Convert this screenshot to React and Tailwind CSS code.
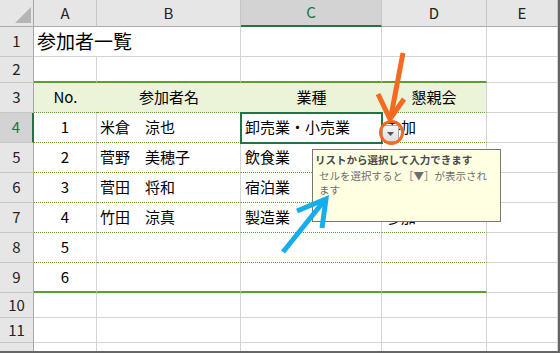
import React from 'react';

const rows = [
    [1, '米倉　涼也', '卸売業・小売業', '参加'],
    [2, '菅野　美穂子', '飲食業', '参加'],
    [3, '菅田　将和', '宿泊業', '不参加'],
    [4, '竹田　涼真', '製造業', '参加'],
    [5, '', '', ''],
    [6, '', '', ''],
];

const cell = 'border-r border-b border-[#d4d4d4] flex items-center text-[15px] text-black whitespace-nowrap';
const rowHead = 'bg-[#e6e6e6] border-r border-r-[#a8a8a8] border-b border-b-[#c6c6c6] flex items-center justify-center text-[15px] text-[#222]';
const colHead = 'bg-[#e6e6e6] border-r border-r-[#c6c6c6] border-b border-b-[#ababab] flex items-center justify-center text-[15px] text-[#222]';
const tbl = 'border-r border-r-[#d4d4d4] border-b border-b-[#5c9f2a] [border-bottom-style:dotted] flex items-center text-[15px] text-black whitespace-nowrap';
const tblLast = 'border-r border-r-[#d4d4d4] border-b-2 border-b-[#5c9f2a] flex items-center text-[15px] text-black whitespace-nowrap';

export default function App() {
    return (
        <div className="relative w-[560px] h-[353px] overflow-hidden bg-white border-r-2 border-b-2 border-[#666] font-['Noto_Sans_CJK_JP',sans-serif]">
            <div className="grid h-full grid-cols-[34px_63px_144px_141px_105px_1fr] grid-rows-[27px_30px_26px_30px_30px_30px_30px_30px_30px_30px_25px_25px_1fr]">
                {/* column headers */}
                <div className="bg-[#e6e6e6] border-r border-r-[#a8a8a8] border-b border-b-[#ababab] flex items-end justify-end pr-[1px] pb-[2px]">
                    <svg width="18" height="17" viewBox="0 0 18 17">
                        <polygon points="1,16 17,16 17,0" fill="#b5b5b5" />
                    </svg>
                </div>
                <div className={colHead}>A</div>
                <div className={colHead}>B</div>
                <div className="bg-[#d3d3d3] border-r border-r-[#c6c6c6] border-b-2 border-b-[#217346] flex items-center justify-center text-[15px] text-[#217346]">C</div>
                <div className={colHead}>D</div>
                <div className={colHead}>E</div>

                {/* row 1 */}
                <div className={rowHead}>1</div>
                <div className="border-b border-[#d4d4d4] flex items-center pl-[3px] text-[19px] text-black whitespace-nowrap">参加者一覧</div>
                <div className={cell}></div>
                <div className={cell}></div>
                <div className={cell}></div>
                <div className={cell}></div>

                {/* row 2 */}
                <div className={rowHead}>2</div>
                <div className="border-r border-r-[#d4d4d4] border-b-2 border-b-[#5c9f2a]"></div>
                <div className="border-r border-r-[#d4d4d4] border-b-2 border-b-[#5c9f2a]"></div>
                <div className="border-r border-r-[#d4d4d4] border-b-2 border-b-[#5c9f2a]"></div>
                <div className="border-r border-r-[#d4d4d4] border-b-2 border-b-[#5c9f2a]"></div>
                <div className={cell}></div>

                {/* row 3: table header */}
                <div className={rowHead}>3</div>
                <div className="bg-[#ebf4d8] border-b border-b-[#5c9f2a] [border-bottom-style:dotted] flex items-center justify-center text-[15px] text-black">No.</div>
                <div className="bg-[#ebf4d8] border-b border-b-[#5c9f2a] [border-bottom-style:dotted] flex items-center justify-center text-[15px] text-black">参加者名</div>
                <div className="bg-[#ebf4d8] border-b border-b-[#5c9f2a] [border-bottom-style:dotted] flex items-center justify-center text-[15px] text-black">業種</div>
                <div className="bg-[#ebf4d8] border-r border-r-[#d4d4d4] border-b border-b-[#5c9f2a] [border-bottom-style:dotted] flex items-center justify-center text-[15px] text-black">懇親会</div>
                <div className={cell}></div>

                {/* rows 4-9 */}
                {rows.map((r, i) => {
                    const c = i === rows.length - 1 ? tblLast : tbl;
                    const sel = i === 0;
                    return (
                        <React.Fragment key={i}>
                            <div className={sel
                                ? 'bg-[#d3d3d3] border-r-2 border-r-[#217346] border-b border-b-[#c6c6c6] flex items-center justify-center text-[15px] text-[#217346]'
                                : rowHead}>{i + 4}</div>
                            <div className={c + ' justify-center'}>{r[0]}</div>
                            <div className={c + ' pl-[3px]'}>{r[1]}</div>
                            <div className={c + ' pl-[4px]'}>{r[2]}</div>
                            <div className={c + ' pl-[4px]'}>{r[3]}</div>
                            <div className={cell}></div>
                        </React.Fragment>
                    );
                })}

                {/* rows 10-12 */}
                {[10, 11, 12].map((n) => (
                    <React.Fragment key={n}>
                        <div className={rowHead + (n === 12 ? ' items-start pt-[4px]' : '')}>{n}</div>
                        <div className={cell}></div>
                        <div className={cell}></div>
                        <div className={cell}></div>
                        <div className={cell}></div>
                        <div className={cell}></div>
                    </React.Fragment>
                ))}
            </div>

            {/* active cell C4 */}
            <div className="absolute left-[240px] top-[112px] w-[143px] h-[32px] border-2 border-[#217346]"></div>

            {/* list dropdown button */}
            <div className="absolute left-[382px] top-[125px] w-[17px] h-[17px] border border-[#a9a9a9] bg-gradient-to-b from-[#f7f7f7] to-[#dedede] flex items-center justify-center">
                <svg width="7" height="4" viewBox="0 0 7 4">
                    <polygon points="0,0 7,0 3.5,4" fill="#555" />
                </svg>
            </div>

            {/* input message tooltip */}
            <div className="absolute left-[312px] top-[149px] w-[189px] h-[73px] bg-[#ffffe1] border border-[#767676] pl-[2px] pt-[3px]">
                <div className="text-[10.5px] leading-[14px] font-bold text-[#4a4a4a] whitespace-nowrap">リストから選択して入力できます</div>
                <div className="mt-[2px] pl-[4px] text-[10.5px] leading-[14px] text-[#6e6e6e] whitespace-nowrap">
                    セルを選択すると［▼］が表示され<br />ます
                </div>
            </div>

            {/* annotations */}
            <svg className="absolute inset-0 pointer-events-none" width="560" height="353" viewBox="0 0 560 353">
                <circle cx="391.5" cy="132.5" r="11" fill="none" stroke="#f26b21" strokeWidth="3" />
                <line x1="403" y1="53" x2="391" y2="116" stroke="#f26b21" strokeWidth="5" />
                <polyline points="378,94 390,119 404,99" fill="none" stroke="#f26b21" strokeWidth="5" strokeLinejoin="miter" />
                <line x1="283" y1="252" x2="324" y2="201" stroke="#15adef" strokeWidth="5" />
                <polyline points="297,211 326,199 322,228" fill="none" stroke="#15adef" strokeWidth="5" strokeLinejoin="miter" />
            </svg>
        </div>
    );
}
